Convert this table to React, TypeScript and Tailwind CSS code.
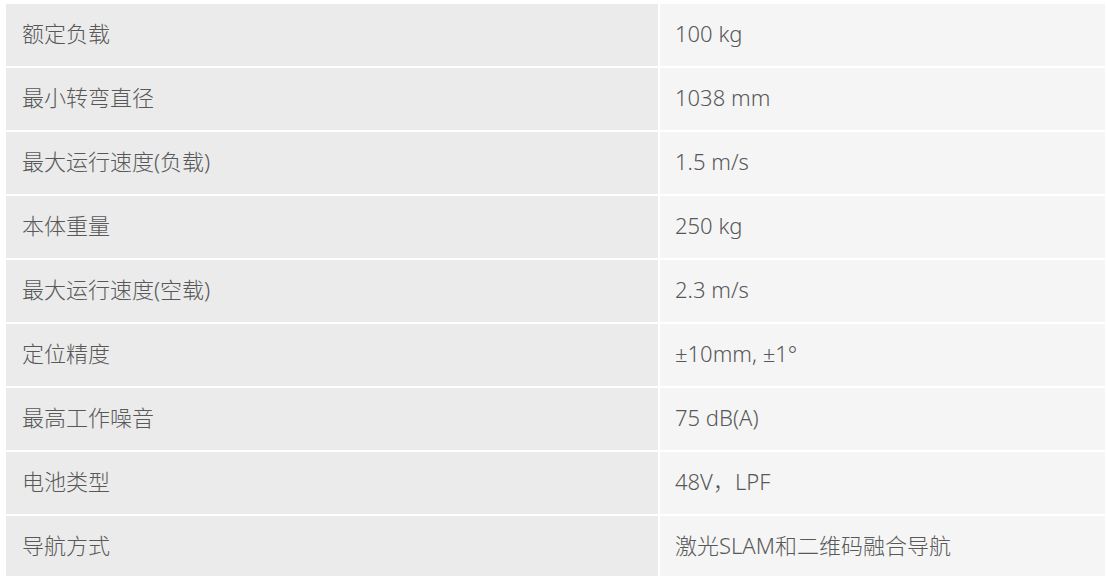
import React from "react";

const rows: [string, string][] = [
  ["额定负载", "100 kg"],
  ["最小转弯直径", "1038 mm"],
  ["最大运行速度(负载)", "1.5 m/s"],
  ["本体重量", "250 kg"],
  ["最大运行速度(空载)", "2.3 m/s"],
  ["定位精度", "±10mm, ±1°"],
  ["最高工作噪音", "75 dB(A)"],
  ["电池类型", "48V，LPF"],
  ["导航方式", "激光SLAM和二维码融合导航"],
];

export default function App() {
  return (
    <div
      className="w-[1106px] h-[576px] overflow-hidden bg-white pt-[4px] pl-[6px] pr-[1px]"
      style={{ fontFamily: '"Noto Sans", "Noto Sans CJK SC", sans-serif' }}
    >
      <div className="grid grid-cols-[652px_1fr] gap-[2px]">
        {rows.map(([k, v]) => (
          <React.Fragment key={k}>
            <div className="h-[62px] bg-[#ebebeb] flex items-center pl-[16px] pb-[3px] text-[22px] font-light text-[#585858]">
              {k}
            </div>
            <div className="h-[62px] bg-[#f5f5f5] flex items-center pl-[15px] pb-[3px] text-[22px] font-light text-[#585858]">
              {v}
            </div>
          </React.Fragment>
        ))}
      </div>
    </div>
  );
}
